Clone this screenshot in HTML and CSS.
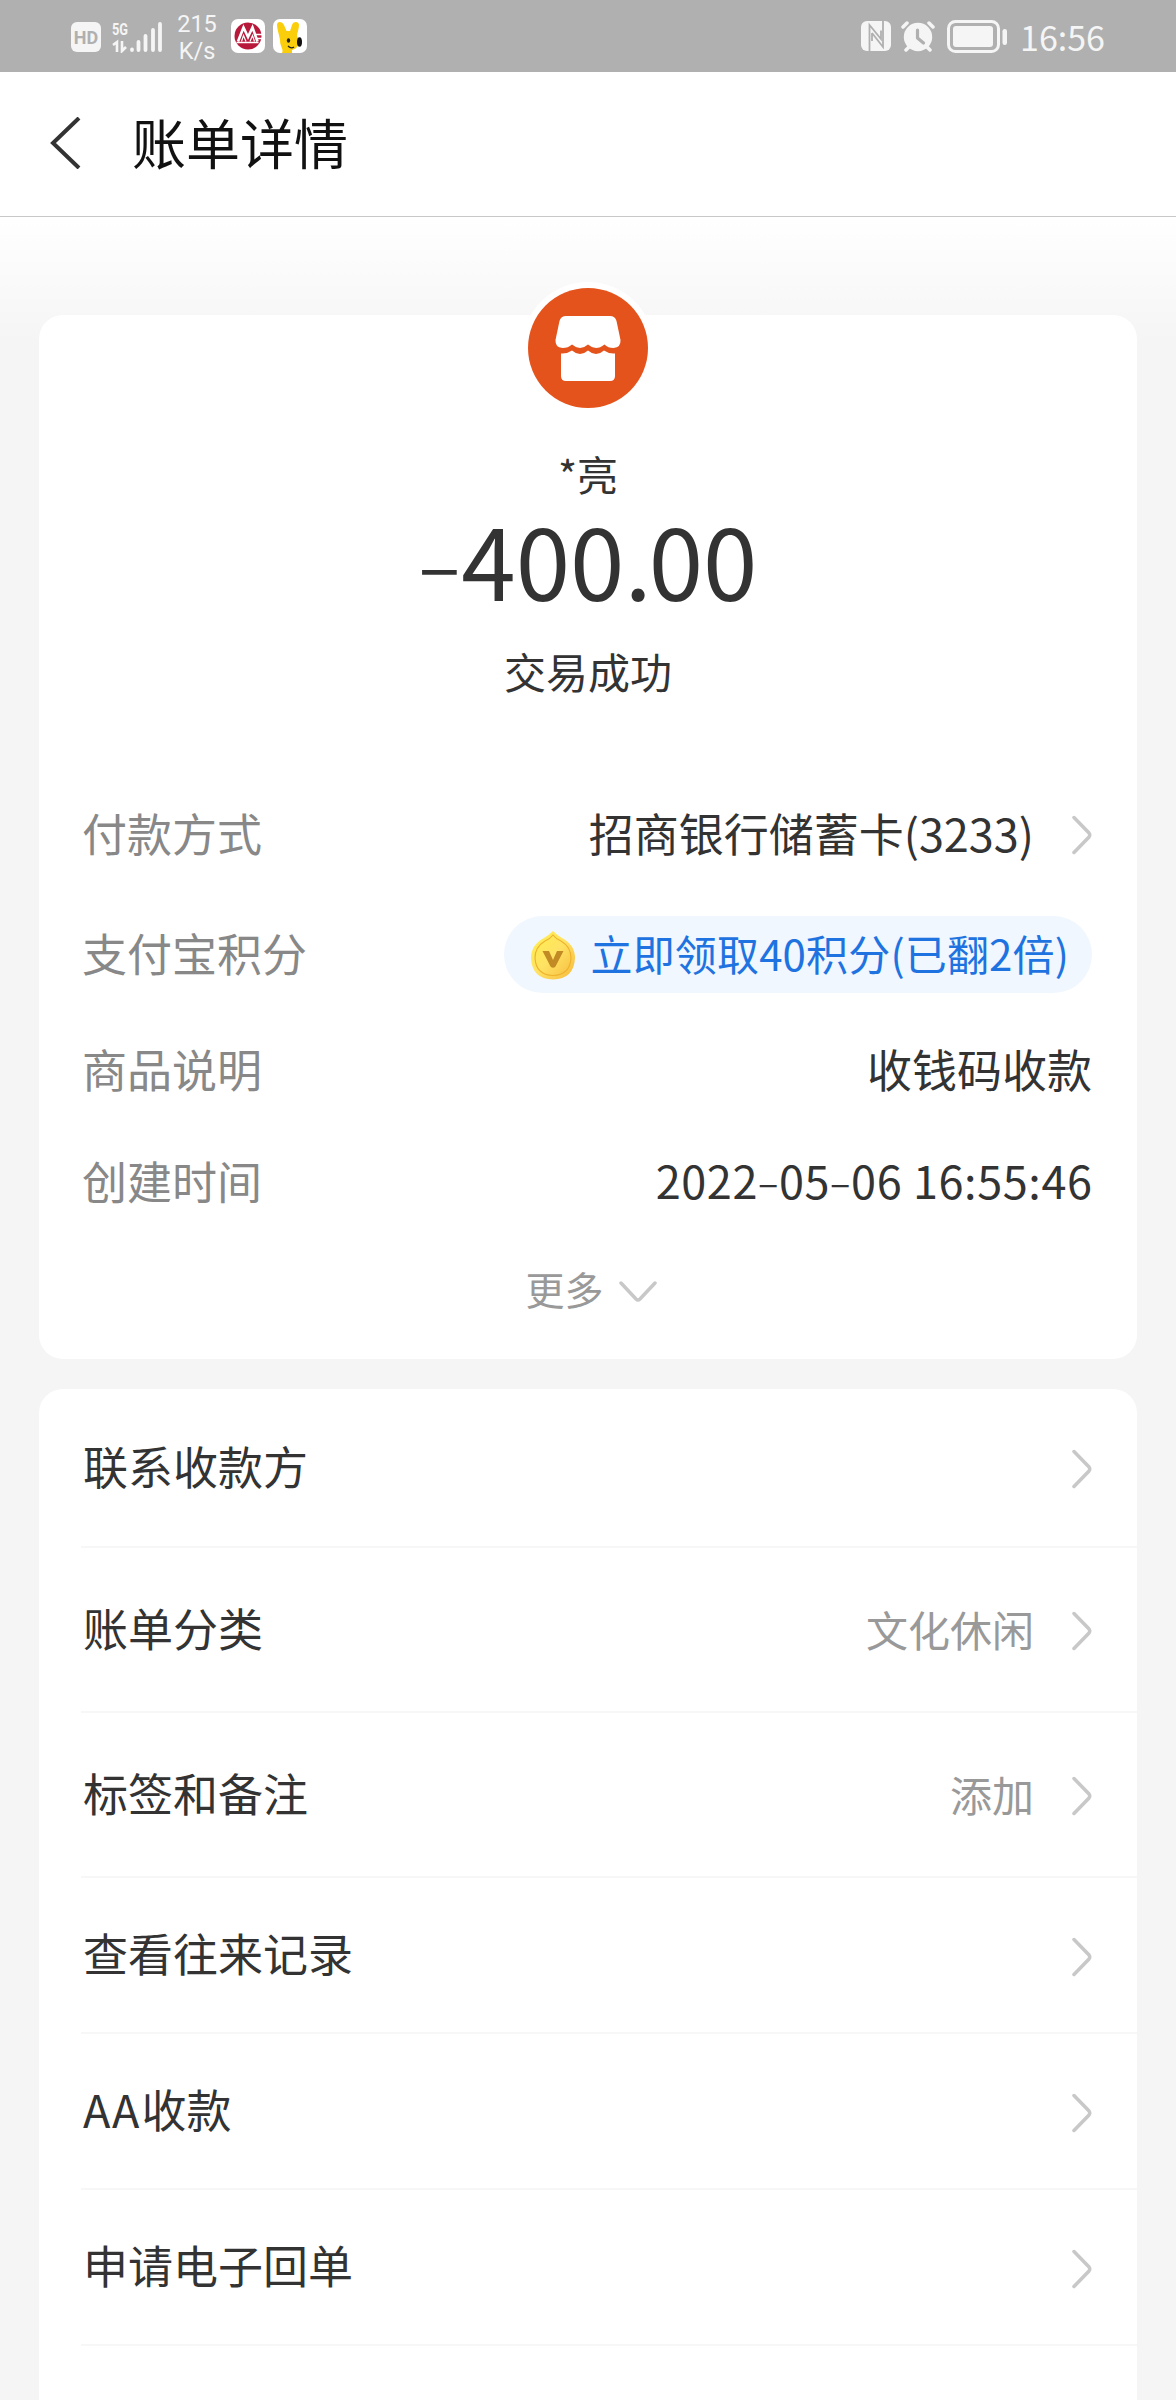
FILE: index.html
```
<!DOCTYPE html>
<html lang="zh-CN">
<head>
	<meta charset="UTF-8">
	<title>账单详情</title>
	<link rel="stylesheet" href="styles.css">
</head>
<body>
	<!-- 状态栏 -->
	<div class="status">
		<div class="status-left">
			<span class="hd">HD</span>
			<svg class="signal" width="50" height="36" viewBox="0 -4 50 36">
				<text x="0" y="13.5" class="g5" textLength="16" lengthAdjust="spacingAndGlyphs">5G</text>
				<path d="M1 24l4-3v10M10 20v10l4-4" fill="none" stroke="#f5f5f5" stroke-width="2.6"/>
				<path d="M20 28.5v.5M26.5 21v8M33.500 15v14M41 9v20M48 3v26" stroke="#f5f5f5" stroke-width="3.800" stroke-linecap="round"/>
			</svg>
			<div class="speed">215<br>K/s</div>
			<svg class="app app-bank" width="34" height="34" viewBox="0 0 34 34">
				<rect width="34" height="34" rx="7" fill="#fff"/>
				<circle cx="17" cy="17" r="13.500" fill="#b8193b"/>
				<path d="M7 22.500L12.500 8.500L17 18L21.500 8.500L26.500 22.500" fill="none" stroke="#fff" stroke-width="2.600"/>
				<path d="M10.500 22.500l2-6 2.500 6M19 22.500l2.500-6 2 6" fill="none" stroke="#fff" stroke-width="1.200"/>
				<path d="M5.500 23.500h22M25 15.500h7M26 19.500h6" stroke="#fff" stroke-width="1.500"/>
			</svg>
			<svg class="app" width="34" height="34" viewBox="0 0 34 34">
				<rect width="34" height="34" rx="7" fill="#fff"/>
				<path d="M9 34C11 30 7 28 7 21C6 15 4 10 4 6C4 2 9 2 11 6L13.500 12H17L19 6C20 2 26 2 26 6C26 10 24 14 24 17C28 23 25 30 19 31V34Z" fill="#fbce0c"/>
				<ellipse cx="15.500" cy="21.500" rx="1.700" ry="2.200" fill="#222"/>
				<ellipse cx="26.500" cy="23" rx="2.500" ry="4.800" fill="#111"/>
				<path d="M15 27q3 3 6 1" fill="none" stroke="#222" stroke-width="1.300"/>
			</svg>
		</div>
		<div class="status-right">
			<svg width="30" height="30" viewBox="0 0 30 30">
				<rect width="30" height="30" rx="6" fill="#f5f5f5"/>
				<path d="M8.500 30V4L20 18V9.500M11 12V20M22 0V26L11 12" fill="none" stroke="#b0b0b0" stroke-width="1.800"/>
			</svg>
			<svg class="alarm" width="34" height="31" viewBox="0 0 34 31">
				<path d="M2 6l4-4M32 6l-4-4M5 29l4-4M29 29l-4-4" stroke="#f5f5f5" stroke-width="3.500" stroke-linecap="round"/>
				<circle cx="17" cy="16" r="14.200" fill="#f5f5f5"/>
				<path d="M16.500 9v8l6 5" fill="none" stroke="#b0b0b0" stroke-width="3.200" stroke-linecap="round" stroke-linejoin="round"/>
			</svg>
			<svg class="battery" width="61" height="33" viewBox="0 0 61 33">
				<rect x="1.500" y="1.500" width="50" height="30" rx="7" fill="none" stroke="#f5f5f5" stroke-width="3"/>
				<rect x="6" y="6" width="40" height="21" rx="3" fill="#f5f5f5"/>
				<rect x="55.500" y="9" width="4.500" height="16" rx="2.200" fill="#f5f5f5"/>
			</svg>
			<span class="clock">16:56</span>
		</div>
	</div>

	<!-- 标题栏 -->
	<div class="header">
		<svg width="34" height="52" viewBox="0 0 34 52"><path d="M32 1L6 26L32 51" fill="none" stroke="#333" stroke-width="4"/></svg>
		<h1>账单详情</h1>
	</div>

	<div class="main">
		<!-- 账单 -->
		<div class="card bill">
			<svg class="shop" width="132" height="132" viewBox="0 0 132 132">
				<circle cx="66" cy="66" r="66" fill="#fff"/>
				<circle cx="66" cy="66" r="60" fill="#e5531c"/>
				<path d="M44 34H88Q93 34 94.500 39L98.500 58Q99 65.500 91.500 66Q86 66 82.500 62.500Q78 66 74 66Q70 66 66 62.500Q62 66 58 66Q54 66 50 62.500Q46 66 40.500 66Q33 65.500 33.500 58L37.500 39Q39 34 44 34Z" fill="#fff"/>
				<path d="M39 71.500Q45 72 50 68.500Q54 72 58 72Q62 72 66 68.500Q70 72 74 72Q78 72 82 68.500Q87 72 93 71.500V94Q93 99 88 99H44Q39 99 39 94Z" fill="#fff"/>
			</svg>
			<p class="name">*亮</p>
			<p class="amount"><span class="minus">–</span>400<span class="dot">.</span>00</p>
			<p class="state">交易成功</p>
			<div class="info pay">
				<span class="label">付款方式</span>
				<span class="value">招商银行储蓄卡(3233)</span>
				<svg class="arrow" width="21" height="40" viewBox="0 0 21 40"><path d="M3 2.500L18 18Q19.500 20 18 22L3 37.500"/></svg>
			</div>
			<div class="info point">
				<span class="label">支付宝积分</span>
				<span class="pill">
					<svg width="46" height="50" viewBox="0 0 46 50">
						<defs>
							<linearGradient id="gold" x1="0" y1="0" x2="1" y2="1">
								<stop offset="0" stop-color="#fff04f"/>
								<stop offset=".5" stop-color="#ffe263"/>
								<stop offset="1" stop-color="#f6b93c"/>
							</linearGradient>
						</defs>
						<path d="M23 1Q27 5 32 8Q45 15 45 28Q44 49 23 49.500Q2 49 1 28Q1 15 14 8Q19 5 23 1Z" fill="url(#gold)"/>
						<path d="M23 5Q26 9 31 11Q41 17 41 28Q40 45 23 45.500Q6 45 5 28Q5 17 15 11Q20 9 23 5Z" fill="none" stroke="#eeb32e" stroke-width="1.200"/>
						<path d="M12.500 21H19L23 30L27 21H33.500L25.500 36.500Q23 39 20.500 36.500Z" fill="#c28a24"/>
					</svg>
					<span class="pill-text">立即领取40积分(已翻2倍)</span>
				</span>
			</div>
			<div class="info goods">
				<span class="label">商品说明</span>
				<span class="value">收钱码收款</span>
			</div>
			<div class="info time">
				<span class="label">创建时间</span>
				<span class="value date">2022<i>–</i>05<i>–</i>06 16:55:46</span>
			</div>
			<div class="more">
				<span>更多</span>
				<svg class="arrow" width="38" height="22" viewBox="0 0 38 22"><path d="M2 2L17 18Q19 20 21 18L36 2"/></svg>
			</div>
		</div>

		<!-- 操作列表 -->
		<div class="card list">
			<div class="item first">
				<span>联系收款方</span>
				<svg class="arrow" width="21" height="40" viewBox="0 0 21 40"><path d="M3 2.500L18 18Q19.500 20 18 22L3 37.500"/></svg>
			</div>
			<div class="item tall">
				<span>账单分类</span>
				<em>文化休闲</em>
				<svg class="arrow" width="21" height="40" viewBox="0 0 21 40"><path d="M3 2.500L18 18Q19.500 20 18 22L3 37.500"/></svg>
			</div>
			<div class="item tall">
				<span>标签和备注</span>
				<em>添加</em>
				<svg class="arrow" width="21" height="40" viewBox="0 0 21 40"><path d="M3 2.500L18 18Q19.500 20 18 22L3 37.500"/></svg>
			</div>
			<div class="item">
				<span>查看往来记录</span>
				<svg class="arrow" width="21" height="40" viewBox="0 0 21 40"><path d="M3 2.500L18 18Q19.500 20 18 22L3 37.500"/></svg>
			</div>
			<div class="item">
				<span><i class="latin">AA</i>收款</span>
				<svg class="arrow" width="21" height="40" viewBox="0 0 21 40"><path d="M3 2.500L18 18Q19.500 20 18 22L3 37.500"/></svg>
			</div>
			<div class="item">
				<span>申请电子回单</span>
				<svg class="arrow" width="21" height="40" viewBox="0 0 21 40"><path d="M3 2.500L18 18Q19.500 20 18 22L3 37.500"/></svg>
			</div>
		</div>
	</div>
</body>
</html>
```
FILE: styles.css
```
*{margin:0;padding:0;box-sizing:border-box;}
body{
	width:1176px;
	height:2400px;
	overflow:hidden;
	display:flex;
	flex-direction:column;
	background:#f5f5f5;
	color:#333;
	font-family:"Noto Sans CJK SC",sans-serif;
	font-size:45px;
}
svg{display:block;flex:none;}
i,em{font-style:normal;}

/* 状态栏 */
.status{
	flex:none;
	display:flex;
	justify-content:space-between;
	height:72px;
	padding:0 71px;
	background:#b0b0b0;
	color:#f5f5f5;
}
.status-left,.status-right{
	display:flex;
	align-items:flex-start;
}
.hd{
	width:30px;
	height:30px;
	margin-top:22px;
	border-radius:6px;
	background:#f5f5f5;
	color:#b0b0b0;
	font:bold 18px/31px Roboto,sans-serif;
	text-align:center;
}
.signal{margin:17px 0 0 11px;}
.g5{
	font:bold 17px Roboto,sans-serif;
	fill:#f5f5f5;
}
.speed{
	width:50px;
	margin:11px 0 0 10px;
	font:400 23.500px/27px Roboto,sans-serif;
	text-align:center;
}
.app{margin:19px 0 0 8px;}
.app-bank{margin-left:9px;}
.status-right{padding-top:21px;}
.alarm{margin-left:10px;}
.battery{margin:-1px 0 0 12px;}
.clock{
	margin-left:12px;
	font-size:34px;
	line-height:31px;
}

/* 标题栏 */
.header{
	flex:none;
	display:flex;
	align-items:center;
	height:145px;
	padding-left:47px;
	border-bottom:1px solid #c8c8c8;
	background:#fff;
}
.header svg{margin-bottom:2px;}
.header h1{
	margin-left:51px;
	padding-bottom:5px;
	color:#111;
	font-size:54px;
	font-weight:400;
	line-height:60px;
}

.main{
	flex:1;
	display:flex;
	flex-direction:column;
	gap:30px;
	padding:98px 39px 0;
	background:linear-gradient(#fff,#fcfcfc 40px,#f5f5f5 125px);
}
.card{
	border-radius:24px;
	background:#fff;
}
.arrow{
	fill:none;
	stroke:#c8c8c8;
	stroke-width:3.500;
	stroke-linecap:round;
}

/* 账单 */
.bill{
	flex:none;
	display:flex;
	flex-direction:column;
	align-items:center;
	height:1044px;
}
.shop{margin-top:-33px;}
.name{
	margin-top:29px;
	font-size:41px;
	line-height:60px;
}
.amount{
	font-size:98px;
	line-height:110px;
}
.minus{
	margin-right:1px;
	font-size:78px;
	line-height:1;
	vertical-align:7px;
}
.dot{letter-spacing:-3px;}
.state{
	margin-top:28px;
	font-size:42px;
	line-height:60px;
}
.info{
	width:100%;
	display:flex;
	align-items:center;
	padding:0 45px 0 43px;
	line-height:56px;
}
.label,.value{padding-bottom:4px;}
.label{
	flex:1;
	color:#888;
}
.info .arrow{margin-left:37px;}
.pay{margin-top:104px;}
.point{margin-top:51px;height:77px;}
.goods{margin-top:48px;}
.time{margin-top:51px;}
.date{letter-spacing:.6px;margin-right:-.6px;}
.date i{
	font-size:38px;
	vertical-align:2px;
}
.pill{
	display:flex;
	align-items:center;
	height:77px;
	padding:0 23px 0 26px;
	border-radius:39px;
	background:#f0f7fe;
	color:#1f73e0;
	font-size:42px;
}
.pill svg{margin-right:15px;}
.pill-text{
	padding-bottom:4px;
	letter-spacing:.15px;
}
.more{
	display:flex;
	align-items:center;
	margin:47px 0 0 6px;
	color:#999;
	font-size:39px;
	line-height:56px;
}
.more span{padding-bottom:4px;}
.more .arrow{margin:3px 0 0 15px;}

/* 操作列表 */
.list{
	flex:1;
	padding-left:42px;
	border-radius:24px 24px 0 0;
}
.item{
	display:flex;
	align-items:center;
	height:156px;
	padding-right:45px;
	border-bottom:2px solid #f7f7f7;
}
.item span{
	flex:1;
	padding:0 0 5px 2px;
}
.item em{
	padding-bottom:3px;
	color:#999;
	font-size:42px;
}
.item .arrow{margin:3px 0 0 37px;}
.latin{letter-spacing:2px;}
.first{height:159px;}
.tall{height:165px;}
```
